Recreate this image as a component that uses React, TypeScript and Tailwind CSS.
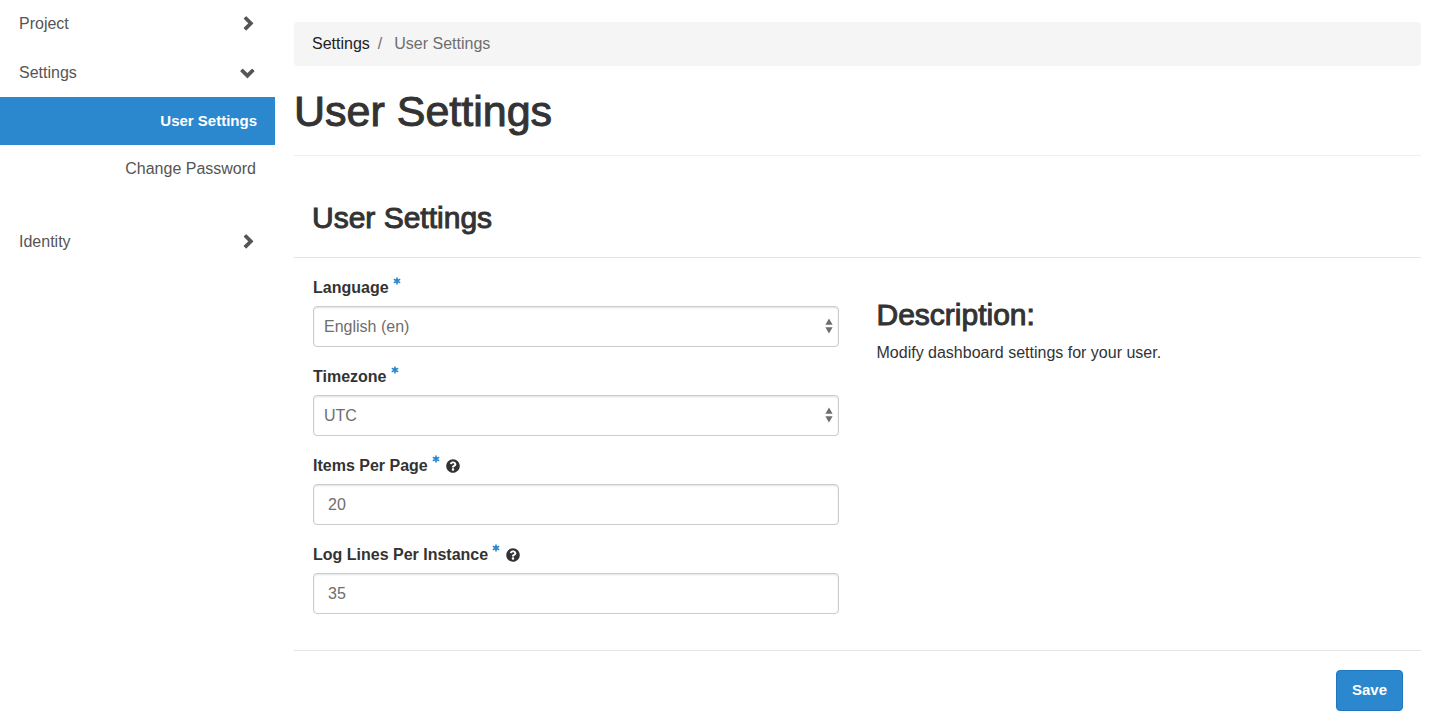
import type { ReactNode } from "react";
import { FaQuestionCircle } from "react-icons/fa";

const fieldClass =
  "block h-[41px] w-full rounded border border-[#cccccc] bg-white text-base text-[#6e6e6e] shadow-[inset_0_1px_2px_rgba(0,0,0,0.12)] outline-none focus:border-[#2b88cf]";

function Chevron({ open = false }: { open?: boolean }) {
  return (
    <svg
      viewBox="0 0 16 16"
      className="size-4 shrink-0"
      fill="#555555"
      stroke="#555555"
      strokeWidth="1.2"
      strokeLinejoin="round"
      aria-hidden="true"
    >
      {open ? (
        <path d="M.9 6.1 2.7 4.3 7.4 9l4.7-4.7 1.8 1.8-6.5 6.5Z" />
      ) : (
        <path d="M6.2.8 4.4 2.6l4.7 4.7L4.4 12l1.8 1.8 6.5-6.5Z" />
      )}
    </svg>
  );
}

function RequiredMark() {
  return (
    <svg
      viewBox="0 0 8 8"
      className="mb-[14px] ml-1 size-2"
      stroke="#2b88cf"
      strokeWidth="1.6"
      strokeLinecap="round"
      aria-hidden="true"
    >
      <path d="M4 1v6M1.4 2.5l5.2 3M6.6 2.5l-5.2 3" />
    </svg>
  );
}

function NavGroup({ label, open = false, children }: { label: string; open?: boolean; children?: ReactNode }) {
  return (
    <li>
      <button
        type="button"
        aria-expanded={open}
        className="flex h-12 w-full items-center justify-between px-[19px] text-left"
      >
        {label}
        <Chevron open={open} />
      </button>
      {children}
    </li>
  );
}

function FieldLabel({ id, text, help = false }: { id: string; text: string; help?: boolean }) {
  return (
    <label htmlFor={id} className="flex h-6 items-center font-bold">
      {text}
      <RequiredMark />
      {help && <FaQuestionCircle className="ml-[6px] size-[14px]" aria-hidden="true" />}
    </label>
  );
}

function SelectField({ id, label, options }: { id: string; label: string; options: string[] }) {
  return (
    <div>
      <FieldLabel id={id} text={label} />
      <div className="relative mt-[6px]">
        <select id={id} className={`${fieldClass} appearance-none pr-8 pl-[10px]`}>
          {options.map((option) => (
            <option key={option}>{option}</option>
          ))}
        </select>
        <svg
          viewBox="0 0 8 16"
          className="pointer-events-none absolute top-3 right-[6px] h-4 w-2"
          fill="#6e6e6e"
          aria-hidden="true"
        >
          <path d="M4 .6 7.6 6.8H.4ZM4 15.4.4 9.2h7.2Z" />
        </svg>
      </div>
    </div>
  );
}

function NumberField({ id, label, value }: { id: string; label: string; value: string }) {
  return (
    <div>
      <FieldLabel id={id} text={label} help />
      <input
        id={id}
        type="text"
        inputMode="numeric"
        defaultValue={value}
        className={`${fieldClass} mt-[6px] px-[14px]`}
      />
    </div>
  );
}

export default function App() {
  return (
    <div className="flex min-h-screen bg-white font-['Liberation_Sans',Arial,sans-serif] text-base text-[#333333]">
      <nav className="w-[275px] shrink-0 text-[#555555]" aria-label="Main">
        <ul className="flex flex-col gap-px">
          <NavGroup label="Project" />
          <NavGroup label="Settings" open>
            <ul className="pb-6 text-right">
              <li>
                <a
                  href="#user"
                  className="flex h-12 items-center justify-end bg-[#2b88cf] pr-[18px] text-[15px] font-bold text-white"
                >
                  User Settings
                </a>
              </li>
              <li>
                <a href="#password" className="flex h-12 items-center justify-end pr-[19px]">
                  Change Password
                </a>
              </li>
            </ul>
          </NavGroup>
          <NavGroup label="Identity" />
        </ul>
      </nav>

      <main className="min-w-0 grow px-[19px] pt-[22px]">
        <ol className="flex h-11 items-center rounded bg-[#f5f5f5] px-[18px]">
          <li>
            <a href="#settings" className="text-[#222222]">
              Settings
            </a>
          </li>
          <li className="flex text-[#6e6e6e]">
            <span className="pr-3 pl-2">/</span>
            User Settings
          </li>
        </ol>

        <h1 className="mt-5 border-b border-[#eeeeee] pb-[18px] text-[43px] leading-[51px] [-webkit-text-stroke:1px]">
          User Settings
        </h1>

        <form onSubmit={(event) => event.preventDefault()}>
          <h2 className="mt-11 border-b border-[#e5e5e5] px-[18px] pb-[21px] text-[30px] leading-9 [-webkit-text-stroke:1px]">
            User Settings
          </h2>
          <div className="grid grid-cols-2 gap-[38px] border-b border-[#e5e5e5] px-[19px] pt-[18px] pb-9">
            <div className="flex flex-col gap-[18px]">
              <SelectField id="language" label="Language" options={["English (en)"]} />
              <SelectField id="timezone" label="Timezone" options={["UTC"]} />
              <NumberField id="pagesize" label="Items Per Page" value="20" />
              <NumberField id="loglines" label="Log Lines Per Instance" value="35" />
            </div>
            <div className="pt-[21px]">
              <h3 className="text-[30px] leading-9 [-webkit-text-stroke:1px]">Description:</h3>
              <p className="mt-2">Modify dashboard settings for your user.</p>
            </div>
          </div>
          <div className="flex justify-end px-[18px] pt-[19px]">
            <button
              type="submit"
              className="h-[41px] rounded border border-[#1f78bd] bg-[#2b88cf] px-[15px] text-[15px] font-bold text-white"
            >
              Save
            </button>
          </div>
        </form>
      </main>
    </div>
  );
}
